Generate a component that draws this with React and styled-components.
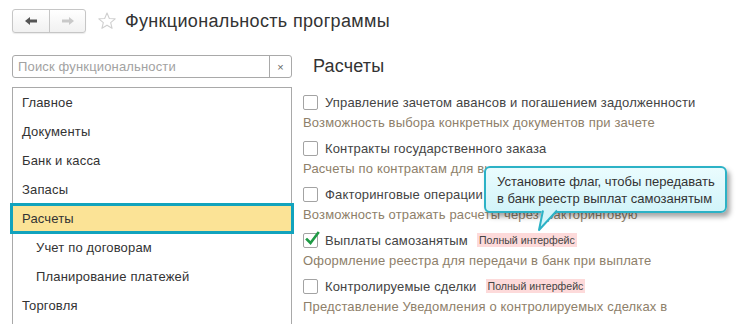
import React from "react";
import styled, { createGlobalStyle } from "styled-components";

const GlobalStyle = createGlobalStyle`
  html, body { margin: 0; padding: 0; background: #fff; }
  body { font-family: "Liberation Sans", Arial, sans-serif; overflow: hidden; }
  * { box-sizing: border-box; }
`;

const Page = styled.div`
  position: relative;
  width: 746px;
  height: 324px;
  overflow: hidden;
  background: #fff;
  letter-spacing: 0.16px;
`;

const Header = styled.div`
  display: flex;
  align-items: center;
  padding: 9px 0 0 12px;
  height: 33px;
`;

const NavGroup = styled.div`
  display: flex;
  height: 24px;
  border: 1px solid #c6c6c6;
  border-radius: 3px;
  background: linear-gradient(#ffffff, #f1f1f1);
  box-shadow: 0 1px 1px rgba(0, 0, 0, 0.08);
`;

const NavButton = styled.div`
  width: 36px;
  display: flex;
  align-items: center;
  justify-content: center;
  & + & { border-left: 1px solid #c6c6c6; }
  color: ${(p) => (p.$active ? "#555" : "#c9c9c9")};
`;

const Star = styled.svg`
  margin-left: 11px;
  width: 20px;
  height: 20px;
`;

const Title = styled.div`
  margin-left: 8px;
  font-size: 18px;
  color: #333;
  line-height: 22px;
  letter-spacing: 0.33px;
`;

const Main = styled.div`
  display: flex;
  padding: 22px 0 0 12px;
`;

const Sidebar = styled.div`
  width: 280px;
  display: flex;
  flex-direction: column;
  gap: 9px;
`;

const Search = styled.div`
  display: flex;
  height: 23px;
  border: 1px solid #a9a9a9;
  border-radius: 3px;
  background: #fff;
`;

const SearchText = styled.div`
  flex: 1;
  padding-left: 5px;
  font-size: 13px;
  line-height: 21px;
  color: #a2a2a2;
`;

const ClearBtn = styled.div`
  width: 22px;
  border-left: 1px solid #a9a9a9;
  display: flex;
  align-items: center;
  justify-content: center;
  font-size: 11px;
  color: #666;
`;

const List = styled.div`
  border: 1px solid #a9a9a9;
  border-bottom: none;
  height: 260px;
`;

const Item = styled.div`
  position: relative;
  height: 29px;
  line-height: 29px;
  font-size: 13px;
  color: #333;
  padding-left: ${(p) => (p.$sub ? 23 : 9)}px;
  background: ${(p) => (p.$selected ? "#fbe396" : "transparent")};
  ${(p) =>
    p.$selected &&
    `
    &::before {
      content: "";
      position: absolute;
      top: -1px;
      bottom: -1px;
      left: -3px;
      right: -3px;
      border: 3px solid #12a3bd;
    }
  `}
`;

const Content = styled.div`
  flex: 1;
  padding-left: 11px;
  display: flex;
  flex-direction: column;
`;

const Heading = styled.div`
  margin-left: 10px;
  font-size: 18px;
  line-height: 22px;
  color: #333;
  margin-bottom: 14px;
`;

const OptionRow = styled.div`
  display: flex;
  align-items: center;
  height: 22px;
`;

const Box = styled.div`
  position: relative;
  width: 15px;
  height: 15px;
  border: 1px solid #a3a3a3;
  border-radius: 2px;
  background: #fff;
  margin-right: 7px;
  flex-shrink: 0;
`;

const Check = styled.svg`
  position: absolute;
  left: 1px;
  top: -3px;
`;

const Label = styled.span`
  font-size: 13px;
  color: #444;
`;

const Badge = styled.span`
  margin-left: 9px;
  background: #fddada;
  color: #444;
  font-size: 10.6px;
  line-height: 14px;
  padding: 0 2px;
  letter-spacing: 0;
`;

const Desc = styled.div`
  font-size: 13px;
  line-height: 20px;
  color: #8e806a;
  margin-bottom: 4px;
  white-space: nowrap;
`;

const Tooltip = styled.div`
  position: absolute;
  left: 484px;
  top: 166px;
  width: 243px;
  height: 47px;
  border: 2px solid #2cb2c6;
  border-radius: 6px;
  background: linear-gradient(#eafcfe, #d2f4f9);
  box-shadow: 3px 4px 5px rgba(0, 0, 0, 0.35);
  padding: 5px 0 0 11px;
  font-size: 13px;
  line-height: 17px;
  color: #333;
  letter-spacing: 0;
`;

const Tail = styled.svg`
  position: absolute;
  left: 50px;
  top: 41px;
  overflow: visible;
`;

const items = [
  { t: "Главное" },
  { t: "Документы" },
  { t: "Банк и касса" },
  { t: "Запасы" },
  { t: "Расчеты", selected: true },
  { t: "Учет по договорам", sub: true },
  { t: "Планирование платежей", sub: true },
  { t: "Торговля" },
];

const options = [
  {
    label: "Управление зачетом авансов и погашением задолженности",
    desc: "Возможность выбора конкретных документов при зачете",
  },
  {
    label: "Контракты государственного заказа",
    desc: "Расчеты по контрактам для выполнения государственного заказа",
  },
  {
    label: "Факторинговые операции",
    desc: "Возможность отражать расчеты через факторинговую",
  },
  {
    label: "Выплаты самозанятым",
    desc: "Оформление реестра для передачи в банк при выплате",
    checked: true,
    badge: true,
  },
  {
    label: "Контролируемые сделки",
    desc: "Представление Уведомления о контролируемых сделках в",
    badge: true,
  },
];

export default function App() {
  return (
    <Page>
      <GlobalStyle />
      <Header>
        <NavGroup>
          <NavButton $active>
            <svg width="14" height="10" viewBox="0 0 14 10">
              <path d="M1 5 L6 1 L6 3.5 L13 3.5 L13 6.5 L6 6.5 L6 9 Z" fill="currentColor" />
            </svg>
          </NavButton>
          <NavButton>
            <svg width="14" height="10" viewBox="0 0 14 10">
              <path d="M13 5 L8 1 L8 3.5 L1 3.5 L1 6.5 L8 6.5 L8 9 Z" fill="currentColor" />
            </svg>
          </NavButton>
        </NavGroup>
        <Star viewBox="0 0 24 24">
          <path
            d="M12 2.5 L14.8 9 L21.8 9.4 L16.4 13.9 L18.1 20.8 L12 17 L5.9 20.8 L7.6 13.9 L2.2 9.4 L9.2 9 Z"
            fill="none"
            stroke="#cfcfcf"
            strokeWidth="1.3"
            strokeLinejoin="round"
          />
        </Star>
        <Title>Функциональность программы</Title>
      </Header>
      <Main>
        <Sidebar>
          <Search>
            <SearchText>Поиск функциональности</SearchText>
            <ClearBtn>×</ClearBtn>
          </Search>
          <List>
            {items.map((it) => (
              <Item key={it.t} $sub={it.sub} $selected={it.selected}>
                {it.t}
              </Item>
            ))}
          </List>
        </Sidebar>
        <Content>
          <Heading>Расчеты</Heading>
          {options.map((o) => (
            <React.Fragment key={o.label}>
              <OptionRow>
                <Box>
                  {o.checked && (
                    <Check width="15" height="15" viewBox="0 0 15 15">
                      <path
                        d="M2 8.5 L5.5 12 L13 2"
                        fill="none"
                        stroke="#1f9a45"
                        strokeWidth="2.6"
                        strokeLinecap="square"
                      />
                    </Check>
                  )}
                </Box>
                <Label>{o.label}</Label>
                {o.badge && <Badge>Полный интерфейс</Badge>}
              </OptionRow>
              <Desc>{o.desc}</Desc>
            </React.Fragment>
          ))}
        </Content>
      </Main>
      <Tooltip>
        Установите флаг, чтобы передавать
        <br />
        в банк реестр выплат самозанятым
        <Tail width="30" height="25" viewBox="0 0 30 25">
          <path d="M6 0 L22 0 L3 21 Z" fill="#d4f4f9" />
          <path d="M7 1.5 L3 21 L21 1.5" fill="none" stroke="#2cb2c6" strokeWidth="2" strokeLinejoin="round" />
        </Tail>
      </Tooltip>
    </Page>
  );
}
